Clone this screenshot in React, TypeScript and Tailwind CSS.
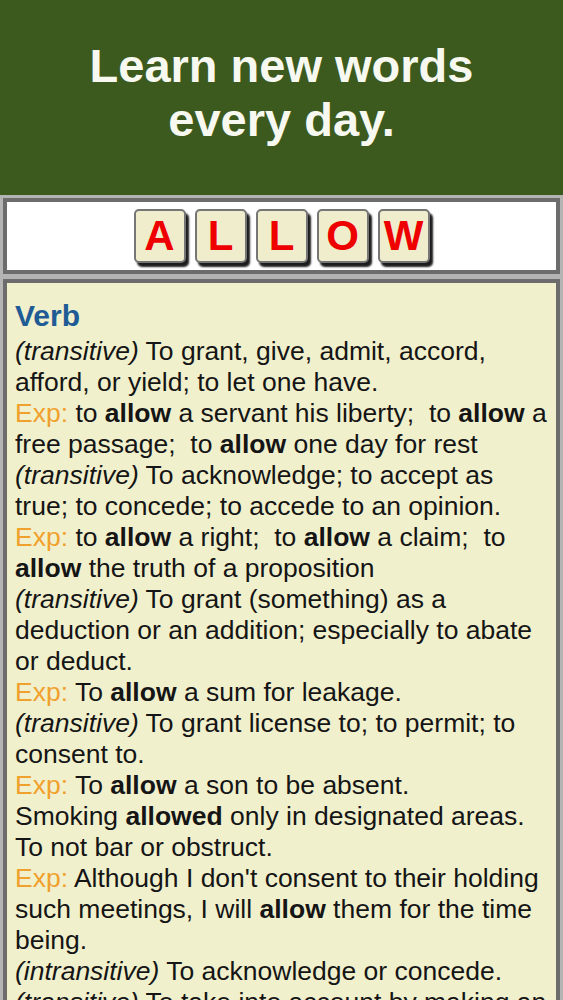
// App.tsx
const WORD = ["A", "L", "L", "O", "W"];

function Exp() {
	return <span className="text-[#f0a02c]">Exp:</span>;
}

function Sense({ label }: { label: string }) {
	return <span className="italic">({label})</span>;
}

const B = ({ children }: { children: string }) => (
	<b className="font-bold">{children}</b>
);

export default function App() {
	return (
		<div className="min-h-screen bg-[#b4b4b4] [font-family:'Liberation_Sans',Arial,sans-serif]">
			<header className="bg-[#3c5a1e] pt-[39px] pb-[48px] text-center">
				<h1 className="text-[47px] leading-[54px] font-bold text-[#f7f8f0]">
					Learn new words
					<br />
					every day.
				</h1>
			</header>

			<div className="px-[3px] pt-[3px] flex flex-col gap-[5px]">
				<div className="bg-white border-[4px] border-[#6c6c6c] h-[76px] flex justify-center items-start pt-[7px] gap-[9px]">
					{WORD.map((ch, i) => (
						<div
							key={i}
							className="w-[52px] h-[54px] bg-[#efedcc] border-2 border-[#767676] rounded-[5px] shadow-[3px_4px_2px_#1c1c1c] flex items-center justify-center text-[42px] font-bold text-[#ee0000] leading-none"
						>
							{ch}
						</div>
					))}
				</div>

				<div className="bg-[#f1f0cd] border-[4px] border-[#6c6c6c] border-b-0 px-[8px] pt-[13px] text-[26.5px] leading-[31px] text-[#151515]">
					<h2 className="text-[30px] leading-[40px] font-bold text-[#1f5c96]">Verb</h2>
					<p>
						<Sense label="transitive" /> To grant, give, admit, accord, afford, or yield; to let one have.
					</p>
					<p>
						<Exp /> to <B>allow</B> a servant his liberty;{"\u00a0"} to <B>allow</B> a free passage;{"\u00a0"} to{" "}
						<B>allow</B> one day for rest
					</p>
					<p>
						<Sense label="transitive" /> To acknowledge; to accept as true; to concede; to accede to an opinion.
					</p>
					<p>
						<Exp /> to <B>allow</B> a right;{"\u00a0"} to <B>allow</B> a claim;{"\u00a0"} to <B>allow</B> the
						truth of a proposition
					</p>
					<p>
						<Sense label="transitive" /> To grant (something) as a deduction or an addition; especially to abate
						or deduct.
					</p>
					<p>
						<Exp /> To <B>allow</B> a sum for leakage.
					</p>
					<p>
						<Sense label="transitive" /> To grant license to; to permit; to consent to.
					</p>
					<p>
						<Exp /> To <B>allow</B> a son to be absent.
					</p>
					<p>
						Smoking <B>allowed</B> only in designated areas.
					</p>
					<p>To not bar or obstruct.</p>
					<p>
						<Exp /> Although I don't consent to their holding such meetings, I will <B>allow</B> them for the
						time being.
					</p>
					<p>
						<Sense label="intransitive" /> To acknowledge or concede.
					</p>
					<p>
						<Sense label="transitive" /> To take into account by making an allowance.
					</p>
				</div>
			</div>
		</div>
	);
}
